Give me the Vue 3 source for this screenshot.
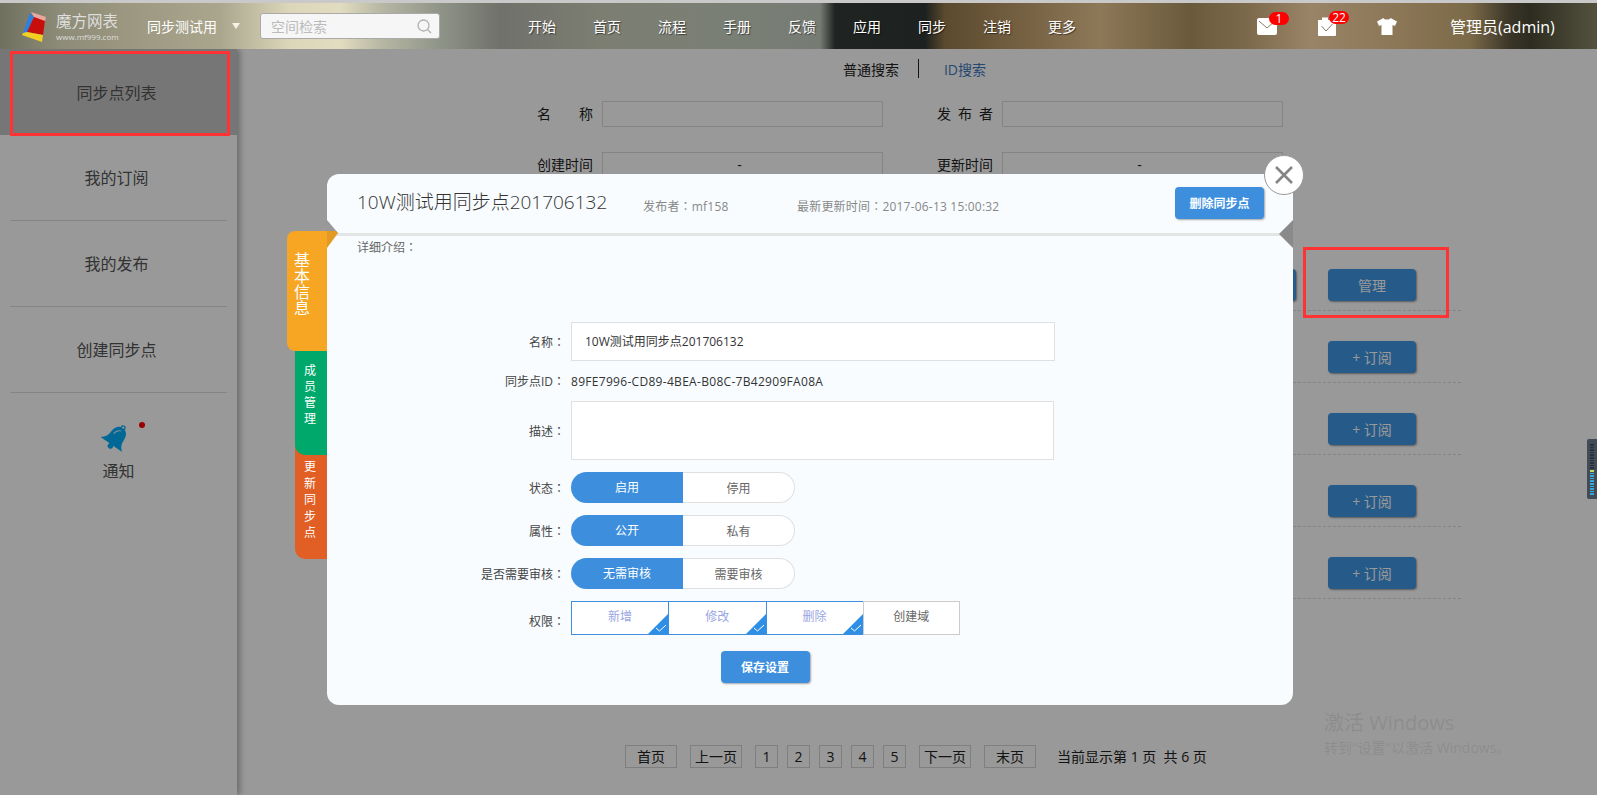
<script setup>
const navItems = ['开始', '首页', '流程', '手册', '反馈', '应用', '同步', '注销', '更多'];
const sideItems = ['我的订阅', '我的发布', '创建同步点'];
const rows = ['管理', '+ 订阅', '+ 订阅', '+ 订阅', '+ 订阅'];
const toggles = [
  { label: '状态', on: '启用', off: '停用' },
  { label: '属性', on: '公开', off: '私有' },
  { label: '是否需要审核', on: '无需审核', off: '需要审核' }
];
const perms = [
  { name: '新增', checked: true },
  { name: '修改', checked: true },
  { name: '删除', checked: true },
  { name: '创建域', checked: false }
];
const pageNums = [1, 2, 3, 4, 5];
// 右侧音量条的刻度
const ticks = Array.from({ length: 20 }, (_, i) => (i < 10 ? 'off' : i === 10 ? 'peak' : 'on'));
</script>

<template>
  <div class="page">
    <div class="top-stripe"></div>
    <header class="header">
      <svg class="logo" width="25" height="31" viewBox="0 0 25 31">
        <polygon points="1,22 8,2 12,6 5,22" fill="#2f7fe0" />
        <polygon points="9,1 24,6 22,15 12,6" fill="#e9a7a0" />
        <polygon points="12,6 23,10 21,24 5,21" fill="#c60f0a" />
        <polygon points="1,22 5,21 21,24 20,31 0,24" fill="#f2cf22" />
      </svg>
      <div class="brand">
        <div class="brand__name">魔方网表</div>
        <div class="brand__url">www.mf999.com</div>
      </div>
      <div class="space-name">同步测试用</div>
      <div class="caret"></div>
      <div class="search">
        <span>空间检索</span>
        <svg width="15" height="15" viewBox="0 0 15 15" fill="none" stroke="#b0b0b0" stroke-width="1.3">
          <circle cx="6.5" cy="6.5" r="5.5" />
          <line x1="10.5" y1="10.5" x2="14" y2="14" />
        </svg>
      </div>
      <nav class="nav">
        <span v-for="item in navItems" :key="item">{{ item }}</span>
      </nav>
      <div class="tools">
        <div class="tool tool--mail">
          <svg width="20" height="17" viewBox="0 0 20 17">
            <rect width="20" height="17" rx="2" fill="#fff" />
            <path d="M2 3l8 7 8-7" fill="none" stroke="#8a7a62" stroke-width="1" />
          </svg>
          <span class="badge badge--mail">1</span>
        </div>
        <div class="tool tool--todo">
          <svg width="18" height="20" viewBox="0 0 18 20">
            <path d="M0 4h4V1.500h6V4h8v15a1 1 0 0 1-1 1H1a1 1 0 0 1-1-1z" fill="#fff" />
            <path d="M3.500 10l4.500 5 6.500-7" fill="none" stroke="#8a7a62" stroke-width="1" />
          </svg>
          <span class="badge badge--todo">22</span>
        </div>
        <svg class="tool tool--shirt" width="20" height="17" viewBox="0 0 20 17">
          <path d="M6.500 0L0 3.500 2 8l2.500-1v10h11V7L18 8l2-4.500L13.500 0C12.500 2 7.500 2 6.500 0z" fill="#fff" />
        </svg>
        <div class="user">管理员(admin)</div>
      </div>
    </header>

    <div class="body">
      <aside class="side">
        <div class="side__active">同步点列表</div>
        <div v-for="item in sideItems" :key="item" class="side__item">{{ item }}</div>
        <div class="side__notice">
          <div class="side__bell">
            <svg width="30" height="30" viewBox="0 0 28 28">
              <g transform="rotate(35 14 14)">
                <path d="M14 3C8.500 3 7 7 6.800 12c-.2 5-2 7-5 9.500h24.400c-3-2.500-4.800-4.500-5-9.500C21 7 19.500 3 14 3z" fill="#02aefa" />
                <circle cx="14" cy="2.500" r="1.800" fill="none" stroke="#02aefa" stroke-width="1.200" />
                <circle cx="14" cy="23" r="2.600" fill="#02aefa" />
                <path d="M10 12c0-3 1.500-5 4-6" fill="none" stroke="#cdefff" stroke-width="1" />
              </g>
            </svg>
            <i class="side__dot"></i>
          </div>
          <div>通知</div>
        </div>
      </aside>

      <main class="main">
        <div class="tabs">
          <span>普通搜索</span>
          <i class="tabs__line"></i>
          <span class="tabs__link">ID搜索</span>
        </div>
        <div class="filter">
          <div class="filter__field">
            <label class="filter__label">名称</label>
            <div class="filter__input"></div>
          </div>
          <div class="filter__field">
            <label class="filter__label">发布者</label>
            <div class="filter__input"></div>
          </div>
          <div class="filter__field">
            <label class="filter__label">创建时间</label>
            <div class="filter__input">-</div>
          </div>
          <div class="filter__field">
            <label class="filter__label">更新时间</label>
            <div class="filter__input">-</div>
          </div>
        </div>
        <div class="list">
          <div v-for="(row, i) in rows" :key="i" class="list__row">
            <button v-if="i === 0" class="list__btn">+ 订阅</button>
            <button class="list__btn">{{ row }}</button>
          </div>
        </div>
        <div class="pager">
          <span class="pager__btn">首页</span>
          <span class="pager__btn">上一页</span>
          <div class="pager__nums">
            <span v-for="n in pageNums" :key="n" class="pager__num">{{ n }}</span>
          </div>
          <span class="pager__btn">下一页</span>
          <span class="pager__btn">末页</span>
          <span class="pager__info">当前显示第 1 页&nbsp; 共 6 页</span>
        </div>
      </main>

      <div class="mask">
        <div class="watermark">
          <div class="watermark__title">激活 Windows</div>
          <div>转到"设置"以激活 Windows。</div>
        </div>

        <section class="modal">
          <div class="tab tab--base">基本信息</div>
          <div class="tab tab--member">成员管理</div>
          <div class="tab tab--update">更新同步点</div>
          <svg class="modal__fold" width="12" height="29" viewBox="0 0 12 29">
            <polygon points="0,0 11,13 0,11" fill="#999" />
            <polygon points="0,11 9,11 11,13 0,28" fill="#e39a22" />
          </svg>
          <i class="modal__notch"></i>
          <button class="modal__close">
            <svg width="20" height="20" viewBox="0 0 20 20">
              <path d="M2 2l16 16M18 2L2 18" stroke="#858585" stroke-width="2.600" fill="none" />
            </svg>
          </button>

          <div class="modal__head">
            <h2 class="modal__title">10W测试用同步点201706132</h2>
            <span class="modal__meta modal__meta--author">发布者<span class="colon">：</span>mf158</span>
            <span class="modal__meta">最新更新时间<span class="colon">：</span>2017-06-13 15:00:32</span>
            <button class="blue-btn blue-btn--del">删除同步点</button>
          </div>
          <div class="modal__intro">详细介绍<span class="colon">：</span></div>

          <div class="form">
            <div class="form__row">
              <div class="form__label">名称<span class="colon">：</span></div>
              <div class="form__input">10W测试用同步点201706132</div>
            </div>
            <div class="form__row form__row--id">
              <div class="form__label">同步点ID<span class="colon">：</span></div>
              <div class="form__id">89FE7996-CD89-4BEA-B08C-7B42909FA08A</div>
            </div>
            <div class="form__row">
              <div class="form__label">描述<span class="colon">：</span></div>
              <div class="form__area"></div>
            </div>
            <div v-for="t in toggles" :key="t.label" class="form__row">
              <div class="form__label">{{ t.label }}<span class="colon">：</span></div>
              <div class="toggle">
                <span class="toggle__on">{{ t.on }}</span>
                <span class="toggle__off">{{ t.off }}</span>
              </div>
            </div>
            <div class="form__row form__row--perm">
              <div class="form__label form__label--perm">权限<span class="colon">：</span></div>
              <div class="perms">
                <div v-for="p in perms" :key="p.name" class="perm" :class="{ 'perm--on': p.checked }">
                  {{ p.name }}
                  <svg v-if="p.checked" class="perm__mark" width="20" height="20" viewBox="0 0 20 20">
                    <polygon points="20,0 20,20 0,20" fill="#2f8fe6" />
                    <path d="M8 14l3.500 3L18 11" fill="none" stroke="#fff" stroke-width="1" />
                  </svg>
                </div>
              </div>
            </div>
            <div class="form__save">
              <button class="blue-btn blue-btn--save">保存设置</button>
            </div>
          </div>
        </section>
      </div>
    </div>

    <!-- 标注红框 -->
    <i class="mark mark--side"></i>
    <i class="mark mark--manage"></i>

    <div class="meter">
      <i v-for="(t, i) in ticks" :key="i" class="meter__tick" :class="'meter__tick--' + t"></i>
    </div>
  </div>
</template>

<style scoped>
.page {
  position: relative;
  width: 1597px;
  height: 795px;
  overflow: hidden;
  background: #fff;
  font-family: "Open Sans", "Noto Sans CJK SC", sans-serif;
  color: #333;
}

.colon {
  font-family: "Noto Sans CJK TC", sans-serif;
}

.top-stripe {
  height: 3px;
  background: #c9c9c9;
}

.header {
  position: relative;
  z-index: 3;
  display: flex;
  align-items: center;
  height: 46px;
  padding-left: 22px;
  box-sizing: border-box;
  background: linear-gradient(90deg, #6f705f 0, #8d8c78 60px, #9a967f 120px, #aaa68e 220px, #dcd7b9 290px, #e2dcc0 340px, #b8b8a4 380px, #8f9488 440px, #70716a 500px, #7c7e72 600px, #7a7f75 740px, #767c74 820px, #1f2321 835px, #1d211f 925px, #5b4a2e 945px, #6e5a3c 1000px, #8d7858 1100px, #6a5a3c 1190px, #7d6a4c 1250px, #9a8468 1310px, #8b7656 1400px, #7b6a48 1470px, #3a3528 1510px, #2d2c20 1530px, #54523e 1597px);
}

.logo {
  margin-right: 9px;
  flex: none;
}

.brand {
  width: 62px;
  margin-right: 29px;
  color: #dedede;
  flex: none;
}

.brand__name {
  font-size: 15.500px;
  line-height: 20px;
  white-space: nowrap;
}

.brand__url {
  font-size: 8px;
  line-height: 11px;
  white-space: nowrap;
}

.space-name {
  width: 70px;
  font-size: 14px;
  color: #fff;
  flex: none;
}

.caret {
  margin: 0 20px 0 15px;
  border-style: solid;
  border-width: 6px 4px 0;
  border-color: #f4f2e4 transparent transparent;
  flex: none;
}

.search {
  display: flex;
  align-items: center;
  justify-content: space-between;
  width: 180px;
  height: 26px;
  padding: 0 7px 0 10px;
  box-sizing: border-box;
  background: #f6f6f6;
  border: 1px solid #aaa;
  border-radius: 3px;
  font-size: 14px;
  color: #bbb;
  flex: none;
}

.nav {
  display: flex;
  gap: 37px;
  margin-left: 88px;
  font-size: 14px;
  color: #fff;
  text-shadow: 1px 1px 1px rgba(0, 0, 0, 0.5);
  flex: none;
}

.tools {
  display: flex;
  align-items: center;
  margin-left: 181px;
}

.tool {
  position: relative;
  display: block;
  flex: none;
}

.tool svg {
  display: block;
}

.tool--mail {
  width: 20px;
  margin-right: 41px;
}

.tool--todo {
  width: 18px;
  margin-right: 41px;
}

.tool--shirt {
  margin-right: 53px;
}

.badge {
  position: absolute;
  height: 13px;
  background: #f00;
  border-radius: 7px;
  color: #fff;
  font-size: 12px;
  line-height: 13px;
  text-align: center;
}

.badge--mail {
  top: -6px;
  left: 12px;
  width: 20px;
}

.badge--todo {
  top: -5px;
  left: 11px;
  width: 20px;
}

.user {
  font-size: 16px;
  color: #fff;
  white-space: nowrap;
}

.body {
  position: relative;
  display: flex;
  height: 746px;
}

.side {
  width: 237px;
  background: #fff;
  box-shadow: 3px 0 6px rgba(0, 0, 0, 0.3);
  font-size: 16px;
  color: #555;
  text-align: center;
  flex: none;
}

.side__active {
  height: 86px;
  padding-right: 4px;
  box-sizing: border-box;
  line-height: 88px;
  background: #c5c5c5;
}

.side__item {
  height: 85px;
  padding-right: 4px;
  line-height: 86px;
  margin: 0 10px;
  border-bottom: 1px solid #ddd;
}

.side__notice {
  padding-top: 28px;
  line-height: 24px;
}

.side__bell {
  position: relative;
  width: 30px;
  height: 30px;
  margin: 0 auto 8px;
  top: 2px;
  left: -3px;
}

.side__bell svg {
  overflow: visible;
}

.side__dot {
  position: absolute;
  top: -1px;
  left: 38px;
  width: 6px;
  height: 6px;
  background: #f00;
  border-radius: 50%;
}

.main {
  flex: 1;
  padding-top: 10px;
  font-size: 14px;
  color: #222;
}

.tabs {
  display: flex;
  justify-content: center;
  align-items: center;
  height: 19px;
  padding-right: 5px;
}

.tabs__line {
  width: 1px;
  height: 19px;
  margin: 0 25px 0 19px;
  background: #222;
}

.tabs__link {
  color: #3f78c0;
}

.filter {
  display: grid;
  grid-template-columns: 346px 346px;
  column-gap: 54px;
  row-gap: 25px;
  margin: 23px 0 0 300px;
}

.filter__field {
  display: flex;
  gap: 9px;
}

.filter__label {
  width: 56px;
  line-height: 26px;
  text-align: justify;
  text-align-last: justify;
  flex: none;
}

.filter__input {
  width: 281px;
  height: 26px;
  padding-right: 6px;
  box-sizing: border-box;
  border: 1px solid #ddd;
  line-height: 24px;
  text-align: center;
}

.list {
  margin: 61px 136px 0 120px;
}

.list__row {
  display: flex;
  justify-content: flex-end;
  gap: 32px;
  padding: 30px 45px 9px 0;
  border-bottom: 1px dashed #ddd;
}

.list__btn {
  width: 88px;
  height: 32px;
  padding: 0;
  background: #3f97e5;
  border: 0;
  border-radius: 4px;
  box-shadow: 1px 1px 2px rgba(0, 0, 0, 0.4);
  color: #fff;
  font: inherit;
}

.pager {
  display: flex;
  align-items: center;
  margin: 146px 0 0 388px;
  line-height: 21px;
}

.pager__btn {
  width: 52px;
  box-sizing: border-box;
  margin-right: 13px;
  border: 1px solid #d4d4d4;
  text-align: center;
}

.pager__nums {
  display: flex;
  gap: 9px;
  margin-right: 13px;
}

.pager__num {
  width: 23px;
  box-sizing: border-box;
  border: 1px solid #d4d4d4;
  text-align: center;
}

.pager__info {
  margin-left: 8px;
  white-space: nowrap;
}

.mask {
  position: absolute;
  inset: 0;
  background: rgba(0, 0, 0, 0.4);
}

.watermark {
  position: absolute;
  left: 1324px;
  top: 660px;
  color: rgba(70, 70, 70, 0.16);
  font-size: 14px;
  line-height: 22px;
  white-space: nowrap;
}

.watermark__title {
  font-size: 20px;
  line-height: 28px;
}

.modal {
  position: absolute;
  left: 327px;
  top: 125px;
  width: 966px;
  height: 531px;
  background: #f8fcff;
  border-radius: 12px;
}

.modal__fold {
  position: absolute;
  left: 0;
  top: 46px;
  z-index: 2;
}

.modal__notch {
  position: absolute;
  right: 0;
  top: 46px;
  width: 14px;
  height: 28px;
  background: #8a8a8a;
  clip-path: polygon(100% 0, 0 50%, 100% 100%);
  z-index: 2;
}

.modal__close {
  position: absolute;
  right: -11px;
  top: -19px;
  z-index: 3;
  display: flex;
  align-items: center;
  justify-content: center;
  width: 40px;
  height: 40px;
  padding: 0;
  background: #fff;
  border: 1px solid #999;
  border-radius: 50%;
}

.modal__head {
  position: relative;
  display: flex;
  align-items: center;
  height: 59px;
  padding: 0 29px 0 30px;
  border-bottom: 3px solid #e4e6e6;
}

.modal__title {
  width: 286px;
  margin: 0 0 6px;
  font-size: 19px;
  font-weight: 300;
  color: #333;
  white-space: nowrap;
}

.modal__meta {
  padding-top: 4px;
  font-size: 12px;
  color: #888;
  white-space: nowrap;
  letter-spacing: 0.2px;
}

.modal__meta--author {
  width: 154px;
}

.blue-btn {
  height: 32px;
  padding: 0;
  background: #3d8fdd;
  border: 0;
  border-radius: 4px;
  box-shadow: 1px 1px 2px rgba(0, 0, 0, 0.35);
  color: #fff;
  font: inherit;
  font-size: 12px;
  font-weight: 600;
}

.blue-btn--del {
  width: 89px;
  margin: 0 0 2px auto;
}

.modal__intro {
  padding: 3px 0 0 30px;
  font-size: 12px;
  line-height: 16px;
  color: #666;
}

.tab {
  position: absolute;
  color: #fff;
  box-sizing: border-box;
}

.tab--base {
  left: -40px;
  top: 57px;
  z-index: 3;
  width: 40px;
  height: 120px;
  padding: 21px 17px 0 7px;
  background: #f6a623;
  border-radius: 8px 0 0 8px;
  font-size: 16px;
  line-height: 16px;
}

.tab--member {
  left: -32px;
  top: 177px;
  z-index: 2;
  width: 32px;
  height: 104px;
  padding: 12px 11px 0 9px;
  background: #00a96b;
  border-radius: 0 0 0 10px;
  font-size: 12px;
  line-height: 16px;
}

.tab--update {
  left: -32px;
  top: 271px;
  z-index: 1;
  width: 32px;
  height: 114px;
  padding: 14px 11px 0 9px;
  background: #e15f25;
  border-radius: 0 0 0 10px;
  font-size: 12px;
  line-height: 16.500px;
}

.form {
  display: flex;
  flex-direction: column;
  gap: 12px;
  margin-top: 66px;
  font-size: 12px;
}

.form__row {
  display: flex;
  align-items: center;
}

.form__row--id {
  height: 16px;
}

.form__row--perm {
  height: 34px;
}

.form__label {
  width: 238px;
  margin-right: 6px;
  text-align: right;
  color: #444;
  flex: none;
}

.form__label--perm {
  padding-top: 6px;
}

.form__input {
  width: 484px;
  height: 39px;
  padding-left: 13px;
  box-sizing: border-box;
  background: #fff;
  border: 1px solid #e0e0e0;
  line-height: 37px;
}

.form__id {
  color: #333;
  letter-spacing: 0.3px;
}

.form__area {
  width: 483px;
  height: 59px;
  box-sizing: border-box;
  background: #fff;
  border: 1px solid #e0e0e0;
}

.toggle {
  display: flex;
  width: 224px;
  height: 31px;
  line-height: 31px;
  text-align: center;
}

.toggle__on {
  width: 112px;
  background: #3d8fdd;
  border-radius: 16px 0 0 16px;
  color: #fff;
}

.toggle__off {
  width: 112px;
  box-sizing: border-box;
  background: #fff;
  border: 1px solid #e0e0e0;
  border-left: 0;
  border-radius: 0 16px 16px 0;
  color: #666;
}

.perms {
  display: flex;
}

.perm {
  position: relative;
  width: 97.250px;
  height: 34px;
  box-sizing: border-box;
  background: #fff;
  border: 1px solid #ccc;
  line-height: 30px;
  text-align: center;
  color: #666;
}

.perm--on {
  border-color: #3d8fdd;
  border-right-width: 0;
  color: #9aa6e2;
}

.perm__mark {
  position: absolute;
  right: 0;
  bottom: 0;
}

.form__save {
  display: flex;
  justify-content: center;
  margin-top: 4px;
  padding-right: 90px;
}

.blue-btn--save {
  width: 89px;
}

.mark {
  position: absolute;
  z-index: 5;
  box-sizing: border-box;
  border: 3px solid #f33;
}

.mark--side {
  left: 10px;
  top: 51px;
  width: 220px;
  height: 85px;
}

.mark--manage {
  left: 1303px;
  top: 247px;
  width: 146px;
  height: 71px;
}

.meter {
  position: absolute;
  z-index: 5;
  right: 0;
  top: 439px;
  display: flex;
  flex-direction: column;
  gap: 1px;
  width: 10px;
  height: 60px;
  padding: 5px 0 4px 3px;
  box-sizing: border-box;
  background: #414c57;
  border-radius: 2px 0 0 2px;
}

.meter__tick {
  width: 4px;
  height: 1.600px;
  flex: none;
}

.meter__tick--off {
  background: #2a3040;
}

.meter__tick--peak {
  background: #c4d860;
}

.meter__tick--on {
  background: #3aa6de;
}
</style>

<style>
body {
  margin: 0;
  overflow: hidden;
}
</style>
